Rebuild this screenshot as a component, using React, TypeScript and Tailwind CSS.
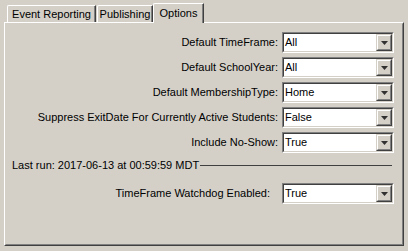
import React from "react";

function Combo({ value }: { value: string }) {
  return (
    <div className="w-[112px] h-[21px] border border-t-[#808080] border-l-[#808080] border-b-white border-r-white">
      <div className="w-full h-full border border-t-[#404040] border-l-[#404040] border-b-[#d4d0c8] border-r-[#d4d0c8] bg-white flex items-center">
        <span className="flex-1 pl-[1px] leading-none">{value}</span>
        <div className="w-[16px] h-[17px] border border-t-[#d4d0c8] border-l-[#d4d0c8] border-b-[#404040] border-r-[#404040]">
          <div className="w-full h-full bg-[#d4d0c8] border border-t-white border-l-white border-b-[#808080] border-r-[#808080] flex items-center justify-center">
            <svg width="7" height="4" viewBox="0 0 7 4">
              <path d="M0 0h7L3.5 4z" fill="#303030" />
            </svg>
          </div>
        </div>
      </div>
    </div>
  );
}

function Row({ label, value }: { label: string; value: string }) {
  return (
    <div className="flex items-center h-[21px]">
      <div className="flex-1 text-right pr-[4px] whitespace-nowrap">{label}</div>
      <Combo value={value} />
    </div>
  );
}

export default function App() {
  return (
    <div className="w-[408px] h-[251px] bg-[#d4d0c8] text-black text-[11px] leading-none font-['Liberation_Sans',Arial,sans-serif] pt-[3px] px-[4px]">
      <div className="flex items-end h-[19px] pl-[3px] relative z-10">
        <div className="w-[89px] h-[17px] border-l border-t border-white rounded-tl-[2px] border-r border-r-[#404040] shadow-[inset_-1px_0_0_#808080] flex items-center justify-center pt-[1px]">
          Event Reporting
        </div>
        <div className="ml-[1px] w-[56px] h-[17px] border-l border-t border-white rounded-tl-[2px] border-r border-r-[#404040] shadow-[inset_-1px_0_0_#808080] flex items-center justify-center pt-[1px]">
          Publishing
        </div>
        <div className="w-[51px] h-[20px] -mb-[1px] bg-[#d4d0c8] border-l border-t border-white rounded-tl-[2px] border-r border-r-[#404040] shadow-[inset_-1px_0_0_#808080] flex items-start justify-center pt-[4px]">
          Options
        </div>
      </div>
      <div className="h-[224px] border border-t-white border-l-white border-b-[#404040] border-r-[#404040]">
        <div className="h-full border border-t-[#d4d0c8] border-l-[#d4d0c8] border-b-[#808080] border-r-[#808080] pt-[8px] pr-[8px] pl-[6px]">
          <div className="flex flex-col gap-[4px]">
            <Row label="Default TimeFrame:" value="All" />
            <Row label="Default SchoolYear:" value="All" />
            <Row label="Default MembershipType:" value="Home" />
            <Row label="Suppress ExitDate For Currently Active Students:" value="False" />
            <Row label="Include No-Show:" value="True" />
          </div>
          <div className="flex items-center h-[16px] mt-[4px]">
            <span className="whitespace-nowrap">Last run: 2017-06-13 at 00:59:59 MDT</span>
            <div className="flex-1 ml-[1px] mr-[2px] border-t border-[#404040]"></div>
          </div>
          <div className="flex items-center h-[21px] mt-[10px]">
            <div className="flex-1 text-right pr-[12px] whitespace-nowrap">TimeFrame Watchdog Enabled:</div>
            <Combo value="True" />
          </div>
        </div>
      </div>
    </div>
  );
}
